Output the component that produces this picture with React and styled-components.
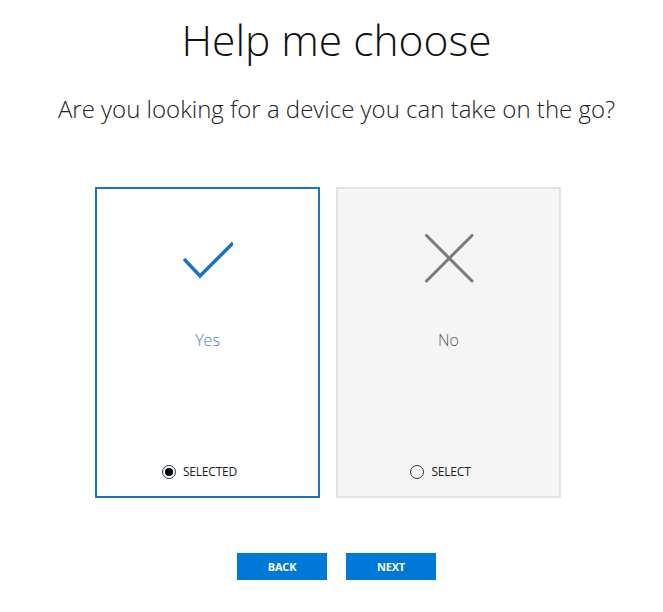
import React from "react";
import styled, { createGlobalStyle } from "styled-components";

const Global = createGlobalStyle`
  html, body { margin: 0; padding: 0; background: #fff; }
  body { font-family: "Open Sans", "Noto Sans", sans-serif; color: #222; }
`;

const Page = styled.div`
  width: 663px;
  box-sizing: border-box;
  padding: 12px 0 0 10px;
  display: flex;
  flex-direction: column;
  align-items: center;
`;

const Title = styled.h1`
  margin: 0;
  font-weight: 300;
  font-size: 42.5px;
  line-height: 56px;
  color: #111;
`;

const Question = styled.p`
  margin: 25px 0 0;
  font-weight: 300;
  font-size: 24px;
  line-height: 32px;
  color: #222;
`;

const Cards = styled.div`
  margin-top: 62px;
  display: flex;
  gap: 16px;
  padding-right: 17px;
`;

const Card = styled.div`
  width: 225px;
  height: 311px;
  box-sizing: border-box;
  border: 2px solid ${(p) => (p.$selected ? "#1b73c1" : "#e3e3e3")};
  background: ${(p) => (p.$selected ? "#ffffff" : "#f5f5f5")};
  display: flex;
  flex-direction: column;
  align-items: center;
  padding-top: 45px;
`;

const Icon = styled.svg`
  width: 50px;
  height: 50px;
  display: block;
`;

const Label = styled.div`
  margin-top: 45px;
  font-size: 16px;
  font-weight: 300;
  line-height: 22px;
  color: ${(p) => (p.$selected ? "#3d83c2" : "#555")};
`;

const RadioRow = styled.div`
  margin-top: auto;
  margin-bottom: 17px;
  margin-right: 16px;
  display: flex;
  align-items: center;
  gap: 7px;
`;

const Radio = styled.span`
  width: 14px;
  height: 14px;
  box-sizing: border-box;
  border-radius: 50%;
  border: 1px solid ${(p) => (p.$on ? "#2c3e50" : "#333")};
  display: flex;
  align-items: center;
  justify-content: center;
  &::after {
    content: "";
    width: 8px;
    height: 8px;
    border-radius: 50%;
    background: ${(p) => (p.$on ? "#000" : "transparent")};
  }
`;

const RadioText = styled.span`
  font-size: 12px;
  line-height: 14px;
  color: #222;
  letter-spacing: -0.2px;
`;

const Buttons = styled.div`
  margin-top: 55px;
  display: flex;
  gap: 19px;
`;

const Button = styled.button`
  width: 90px;
  height: 27px;
  border: none;
  background: #0078d7;
  color: #fff;
  font-family: "Open Sans", "Noto Sans", sans-serif;
  font-weight: 700;
  font-size: 11px;
  letter-spacing: -0.2px;
  cursor: pointer;
`;

export default function App() {
  return (
    <>
      <Global />
      <Page>
        <Title>Help me choose</Title>
        <Question>Are you looking for a device you can take on the go?</Question>
        <Cards>
          <Card $selected>
            <Icon viewBox="0 0 50 50">
              <polyline
                points="1,25 17,42 50,9"
                fill="none"
                stroke="#1a72c4"
                strokeWidth="3.5"
              />
            </Icon>
            <Label $selected>Yes</Label>
            <RadioRow>
              <Radio $on />
              <RadioText>SELECTED</RadioText>
            </RadioRow>
          </Card>
          <Card>
            <Icon viewBox="0 0 50 50">
              <path
                d="M2.5 1.5 L48 47 M48 1.5 L2.5 47"
                fill="none"
                stroke="#7a7a7a"
                strokeWidth="3"
                strokeLinecap="round"
              />
            </Icon>
            <Label>No</Label>
            <RadioRow>
              <Radio />
              <RadioText>SELECT</RadioText>
            </RadioRow>
          </Card>
        </Cards>
        <Buttons>
          <Button>BACK</Button>
          <Button>NEXT</Button>
        </Buttons>
      </Page>
    </>
  );
}
